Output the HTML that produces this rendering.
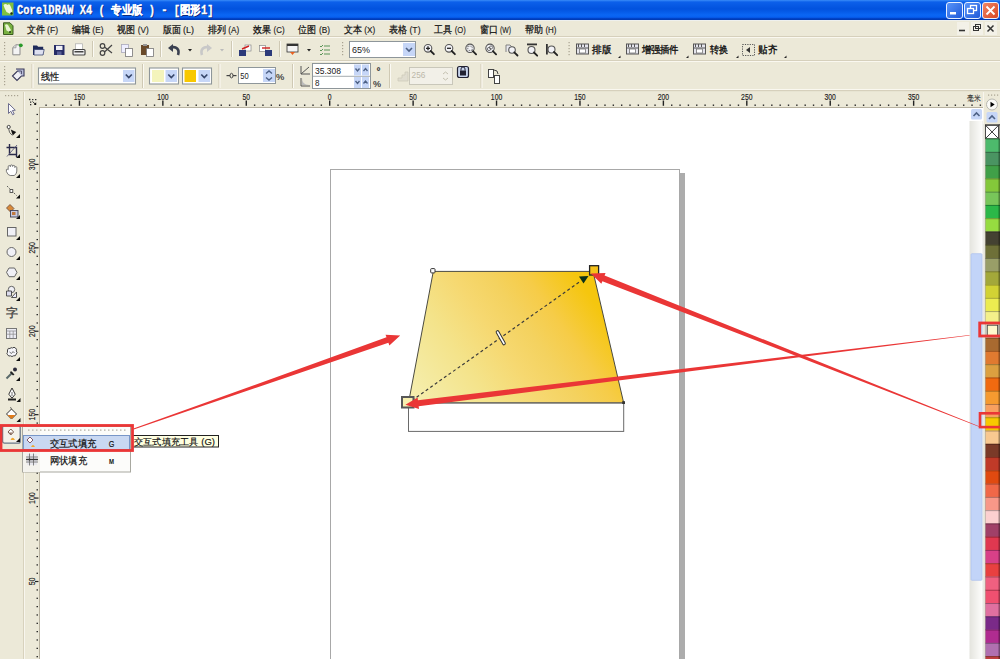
<!DOCTYPE html>
<html><head><meta charset="utf-8"><title>CorelDRAW X4</title>
<style>html,body{margin:0;padding:0;width:1000px;height:659px;overflow:hidden;background:#ece9d8;font-family:"Liberation Sans",sans-serif;}
svg{display:block;position:absolute;left:0;top:0}</style></head>
<body><svg width="1000" height="659" viewBox="0 0 1000 659">
<defs><linearGradient id="tg" x1="0" y1="0" x2="0" y2="1"><stop offset="0" stop-color="#3a8cf8"/><stop offset="0.1" stop-color="#0c60ea"/><stop offset="0.45" stop-color="#0252de"/><stop offset="0.75" stop-color="#0a66f4"/><stop offset="0.86" stop-color="#0860f0"/><stop offset="0.93" stop-color="#0040c4"/><stop offset="1" stop-color="#0038b0"/></linearGradient><linearGradient id="fillg" gradientUnits="userSpaceOnUse" x1="412" y1="400.5" x2="580" y2="281.5"><stop offset="0" stop-color="#f6efb0"/><stop offset="0.13" stop-color="#f4eaa0"/><stop offset="0.316" stop-color="#f4e38a"/><stop offset="0.514" stop-color="#f6d870"/><stop offset="0.66" stop-color="#f4d25f"/><stop offset="0.8" stop-color="#f6cc48"/><stop offset="1" stop-color="#f5c60e"/></linearGradient><linearGradient id="btnb" x1="0" y1="0" x2="1" y2="1"><stop offset="0" stop-color="#5a96fa"/><stop offset="1" stop-color="#1e58d8"/></linearGradient><linearGradient id="btnr" x1="0" y1="0" x2="1" y2="1"><stop offset="0" stop-color="#f08868"/><stop offset="1" stop-color="#d84420"/></linearGradient></defs><rect x="0" y="0" width="1000" height="20" fill="url(#tg)"/><rect x="0" y="20" width="1000" height="1" fill="#eef0ee"/><rect x="2" y="2.5" width="11.5" height="13" fill="#80c040"/><path d="M3.5 5 q2 -2 4 0 q2 -2 3 1 l2 5 l-2 3 l-4 -2 l-2 -4 z" fill="#eef8dc"/><circle cx="11.5" cy="13.5" r="1.2" fill="#203010"/><text x="18" y="14.5" font-family="Liberation Mono" font-size="12" fill="#0a2a80" font-weight="bold" textLength="196.5" lengthAdjust="spacingAndGlyphs" >CorelDRAW X4 ( 专业版 ) - [图形1]</text><text x="17" y="13.5" font-family="Liberation Mono" font-size="12" fill="#fff" font-weight="bold" textLength="196.5" lengthAdjust="spacingAndGlyphs" stroke="#fff" stroke-width="0.3">CorelDRAW X4 ( 专业版 ) - [图形1]</text><rect x="946.5" y="2.5" width="16" height="16" rx="2.5" fill="url(#btnb)" stroke="#e8f0ff" stroke-width="1"/><rect x="950" y="12" width="6" height="2.5" fill="#fff"/><rect x="964.5" y="2.5" width="16" height="16" rx="2.5" fill="url(#btnb)" stroke="#e8f0ff" stroke-width="1"/><rect x="970.5" y="5.5" width="6" height="5" fill="none" stroke="#fff" stroke-width="1.3"/><rect x="967.5" y="8.5" width="6" height="5" fill="url(#btnb)" stroke="#fff" stroke-width="1.3"/><rect x="982.5" y="2.5" width="16" height="16" rx="2.5" fill="url(#btnr)" stroke="#e8f0ff" stroke-width="1"/><path d="M986.5 6.5 L994.5 14.5 M994.5 6.5 L986.5 14.5" stroke="#fff" stroke-width="1.8"/><rect x="0" y="21" width="1000" height="15" fill="#ece9d8"/><path d="M3.5 22.8 h6.5 l3 3 v8.7 h-9.5 z" fill="#78b040" stroke="#3a5a20" stroke-width="1"/><path d="M5 25 q1.5 -1.5 3 0 l3 5 l-1.5 2 l-3 -1.5 z" fill="#e8f4d0"/><circle cx="10" cy="32" r="0.9" fill="#203010"/><text x="26.6" y="33" font-family="Liberation Sans" font-size="10" fill="#111" textLength="18" lengthAdjust="spacingAndGlyphs" stroke="#111" stroke-width="0.25">文件</text><text x="47.1" y="33" font-family="Liberation Sans" font-size="8.8" fill="#222" textLength="11" lengthAdjust="spacingAndGlyphs" stroke="#222" stroke-width="0.15">(F)</text><text x="71.9" y="33" font-family="Liberation Sans" font-size="10" fill="#111" textLength="18" lengthAdjust="spacingAndGlyphs" stroke="#111" stroke-width="0.25">编辑</text><text x="92.4" y="33" font-family="Liberation Sans" font-size="8.8" fill="#222" textLength="11" lengthAdjust="spacingAndGlyphs" stroke="#222" stroke-width="0.15">(E)</text><text x="117.2" y="33" font-family="Liberation Sans" font-size="10" fill="#111" textLength="18" lengthAdjust="spacingAndGlyphs" stroke="#111" stroke-width="0.25">视图</text><text x="137.7" y="33" font-family="Liberation Sans" font-size="8.8" fill="#222" textLength="11" lengthAdjust="spacingAndGlyphs" stroke="#222" stroke-width="0.15">(V)</text><text x="162.5" y="33" font-family="Liberation Sans" font-size="10" fill="#111" textLength="18" lengthAdjust="spacingAndGlyphs" stroke="#111" stroke-width="0.25">版面</text><text x="183.0" y="33" font-family="Liberation Sans" font-size="8.8" fill="#222" textLength="11" lengthAdjust="spacingAndGlyphs" stroke="#222" stroke-width="0.15">(L)</text><text x="207.8" y="33" font-family="Liberation Sans" font-size="10" fill="#111" textLength="18" lengthAdjust="spacingAndGlyphs" stroke="#111" stroke-width="0.25">排列</text><text x="228.3" y="33" font-family="Liberation Sans" font-size="8.8" fill="#222" textLength="11" lengthAdjust="spacingAndGlyphs" stroke="#222" stroke-width="0.15">(A)</text><text x="253.1" y="33" font-family="Liberation Sans" font-size="10" fill="#111" textLength="18" lengthAdjust="spacingAndGlyphs" stroke="#111" stroke-width="0.25">效果</text><text x="273.6" y="33" font-family="Liberation Sans" font-size="8.8" fill="#222" textLength="11" lengthAdjust="spacingAndGlyphs" stroke="#222" stroke-width="0.15">(C)</text><text x="298.4" y="33" font-family="Liberation Sans" font-size="10" fill="#111" textLength="18" lengthAdjust="spacingAndGlyphs" stroke="#111" stroke-width="0.25">位图</text><text x="318.9" y="33" font-family="Liberation Sans" font-size="8.8" fill="#222" textLength="11" lengthAdjust="spacingAndGlyphs" stroke="#222" stroke-width="0.15">(B)</text><text x="343.7" y="33" font-family="Liberation Sans" font-size="10" fill="#111" textLength="18" lengthAdjust="spacingAndGlyphs" stroke="#111" stroke-width="0.25">文本</text><text x="364.2" y="33" font-family="Liberation Sans" font-size="8.8" fill="#222" textLength="11" lengthAdjust="spacingAndGlyphs" stroke="#222" stroke-width="0.15">(X)</text><text x="389.0" y="33" font-family="Liberation Sans" font-size="10" fill="#111" textLength="18" lengthAdjust="spacingAndGlyphs" stroke="#111" stroke-width="0.25">表格</text><text x="409.5" y="33" font-family="Liberation Sans" font-size="8.8" fill="#222" textLength="11" lengthAdjust="spacingAndGlyphs" stroke="#222" stroke-width="0.15">(T)</text><text x="434.3" y="33" font-family="Liberation Sans" font-size="10" fill="#111" textLength="18" lengthAdjust="spacingAndGlyphs" stroke="#111" stroke-width="0.25">工具</text><text x="454.8" y="33" font-family="Liberation Sans" font-size="8.8" fill="#222" textLength="11" lengthAdjust="spacingAndGlyphs" stroke="#222" stroke-width="0.15">(O)</text><text x="479.6" y="33" font-family="Liberation Sans" font-size="10" fill="#111" textLength="18" lengthAdjust="spacingAndGlyphs" stroke="#111" stroke-width="0.25">窗口</text><text x="500.1" y="33" font-family="Liberation Sans" font-size="8.8" fill="#222" textLength="11" lengthAdjust="spacingAndGlyphs" stroke="#222" stroke-width="0.15">(W)</text><text x="524.9" y="33" font-family="Liberation Sans" font-size="10" fill="#111" textLength="18" lengthAdjust="spacingAndGlyphs" stroke="#111" stroke-width="0.25">帮助</text><text x="545.4" y="33" font-family="Liberation Sans" font-size="8.8" fill="#222" textLength="11" lengthAdjust="spacingAndGlyphs" stroke="#222" stroke-width="0.15">(H)</text><rect x="957" y="22" width="12" height="13" fill="#f3f1e8"/><rect x="971" y="22" width="12" height="13" fill="#f3f1e8"/><rect x="985" y="22" width="12" height="13" fill="#f3f1e8"/><path d="M959 30.5 h6" stroke="#333" stroke-width="1.6"/><rect x="973.5" y="26.5" width="5" height="4" fill="none" stroke="#333" stroke-width="1"/><rect x="975.5" y="24.5" width="5" height="4" fill="none" stroke="#333" stroke-width="1"/><path d="M987.5 25.5 l6 6 M993.5 25.5 l-6 6" stroke="#333" stroke-width="1.5"/><rect x="0" y="36" width="1000" height="1" fill="#d6d0bc"/><rect x="0" y="37" width="1000" height="1" fill="#faf8f0"/><rect x="4" y="42" width="1.2" height="1.2" fill="#a8a290"/><rect x="4" y="45" width="1.2" height="1.2" fill="#a8a290"/><rect x="4" y="48" width="1.2" height="1.2" fill="#a8a290"/><rect x="4" y="51" width="1.2" height="1.2" fill="#a8a290"/><rect x="4" y="54" width="1.2" height="1.2" fill="#a8a290"/><path d="M12.8 54.8 V47.5 L16 44.8 H20 V54.8 Z" fill="#f4f4f4" stroke="#8a8a8a" stroke-width="1"/><path d="M13 47.8 h3 v-3" fill="#ddd" stroke="#8a8a8a" stroke-width="0.7"/><circle cx="20.8" cy="45.3" r="1.9" fill="#2a9a2a"/><path d="M33 45.5 h4 l1.2 1.2 h5 v8.3 h-10.2 z" fill="#1e2a5a"/><path d="M34.2 49.5 h10 l-1.2 5.5 h-9 z" fill="#dde0f0" stroke="#2a3666" stroke-width="0.7"/><rect x="54" y="45" width="10.5" height="10" fill="#262c66"/><rect x="56" y="45.8" width="6.5" height="4.2" fill="#f0f0f6"/><rect x="57" y="51.5" width="4.5" height="3.5" fill="#5a6098"/><rect x="75.5" y="43.8" width="7" height="6" fill="#fff" stroke="#aaa" stroke-width="0.7"/><rect x="73" y="49.5" width="12" height="5.5" rx="1" fill="#f2f2f2" stroke="#444" stroke-width="1.2"/><rect x="74.5" y="51" width="9" height="1.5" fill="#444"/><rect x="92" y="41" width="1" height="16" fill="#cfc9b4"/><rect x="93" y="41" width="1" height="16" fill="#fbfaf4"/><circle cx="102.5" cy="53" r="2.3" fill="none" stroke="#444" stroke-width="1.2"/><circle cx="102.5" cy="46" r="2.3" fill="none" stroke="#444" stroke-width="1.2"/><path d="M104.5 47 L112 53 M104.5 52 L112 45" stroke="#444" stroke-width="1.2"/><rect x="121.5" y="44.5" width="7" height="8" fill="#eef" stroke="#aab" stroke-width="0.8"/><rect x="125.5" y="48.5" width="7" height="8" fill="#fff" stroke="#777" stroke-width="0.8"/><rect x="141" y="45" width="8" height="10" fill="#6a4a2a"/><rect x="143" y="44" width="4" height="2" fill="#999"/><rect x="146.5" y="48.5" width="7" height="8" fill="#fff" stroke="#777" stroke-width="0.8"/><rect x="160" y="41" width="1" height="16" fill="#cfc9b4"/><rect x="161" y="41" width="1" height="16" fill="#fbfaf4"/><path d="M178 55 C180 49 176 46 171 47.5" fill="none" stroke="#3a4050" stroke-width="2.6"/><path d="M168 48 L173 44 L173 52 Z" fill="#3a4050"/><path d="M188 49 h4 l-2 2.5 z" fill="#222"/><path d="M202 55 C200 49 204 46 209 47.5" fill="none" stroke="#c8c8c8" stroke-width="2.6"/><path d="M212 48 L207 44 L207 52 Z" fill="#c8c8c8"/><path d="M220 49 h4 l-2 2.5 z" fill="#bbb"/><rect x="231" y="41" width="1" height="16" fill="#cfc9b4"/><rect x="232" y="41" width="1" height="16" fill="#fbfaf4"/><rect x="245" y="45" width="6" height="6" fill="#fff" stroke="#888" stroke-width="0.7"/><rect x="239" y="50" width="7" height="6" fill="#2c3a7a"/><path d="M242 49 L249 46" stroke="#d02020" stroke-width="1.4"/><rect x="259.5" y="45.5" width="6" height="6" fill="#fff" stroke="#888" stroke-width="0.7"/><rect x="265" y="50" width="7" height="6" fill="#2c3a7a"/><path d="M262 48 L270 48" stroke="#d02020" stroke-width="1.4"/><rect x="279" y="41" width="1" height="16" fill="#cfc9b4"/><rect x="280" y="41" width="1" height="16" fill="#fbfaf4"/><rect x="287" y="44" width="11" height="8" fill="#f4f4f4" stroke="#333" stroke-width="0.8"/><rect x="287" y="44" width="11" height="2" fill="#333"/><path d="M290 52 l2.5 3 l2.5 -3 z" fill="#e86020"/><path d="M307 49 h4 l-2 2.5 z" fill="#222"/><path d="M320 46 l1 1 l2 -2 M320 50 l1 1 l2 -2 M320 54 l1 1 l2 -2 M324 46 h6 M324 50 h6 M324 54 h6" stroke="#4a8a4a" stroke-width="0.9" fill="none"/><rect x="342" y="42" width="1.2" height="1.2" fill="#a8a290"/><rect x="342" y="45" width="1.2" height="1.2" fill="#a8a290"/><rect x="342" y="48" width="1.2" height="1.2" fill="#a8a290"/><rect x="342" y="51" width="1.2" height="1.2" fill="#a8a290"/><rect x="342" y="54" width="1.2" height="1.2" fill="#a8a290"/><rect x="349.5" y="41.5" width="66" height="16" fill="#fff" stroke="#8e969a" stroke-width="1"/><rect x="403" y="43" width="12" height="13" fill="#c6d6f7"/><path d="M406 48 l3 3 l3 -3" stroke="#4d6185" stroke-width="1.6" fill="none"/><text x="352" y="52.8" font-family="Liberation Sans" font-size="9.2" fill="#222" textLength="18" lengthAdjust="spacingAndGlyphs" >65%</text><circle cx="428" cy="48.3" r="3.8" fill="#f2f2f6" stroke="#555" stroke-width="1.1"/><path d="M430.7 51.0 l3.2 3.2" stroke="#222" stroke-width="1.8" stroke-linecap="round"/><path d="M426 48.3 h4 M428 46.3 v4" stroke="#222" stroke-width="1.3"/><circle cx="449" cy="48.3" r="3.8" fill="#f2f2f6" stroke="#555" stroke-width="1.1"/><path d="M451.7 51.0 l3.2 3.2" stroke="#222" stroke-width="1.8" stroke-linecap="round"/><path d="M447 48.3 h4" stroke="#222" stroke-width="1.3"/><circle cx="470" cy="48.3" r="4.2" fill="#f2f2f6" stroke="#555" stroke-width="1.1"/><path d="M472.9 51.2 l3.2 3.2" stroke="#222" stroke-width="1.8" stroke-linecap="round"/><rect x="467.8" y="46.2" width="4.4" height="4.2" fill="none" stroke="#555" stroke-width="0.8" stroke-dasharray="1,0.8"/><circle cx="490" cy="48.3" r="4.2" fill="#f2f2f6" stroke="#555" stroke-width="1.1"/><path d="M492.9 51.2 l3.2 3.2" stroke="#222" stroke-width="1.8" stroke-linecap="round"/><circle cx="489" cy="49" r="1.6" fill="none" stroke="#555" stroke-width="0.8"/><circle cx="491" cy="47.5" r="1.6" fill="none" stroke="#555" stroke-width="0.8"/><path d="M506 52 v-7 h4 l1.5 1.5 v2" fill="#e8e8ee" stroke="#777" stroke-width="0.9"/><circle cx="512" cy="50" r="3.3" fill="#f2f2f6" stroke="#555" stroke-width="1.1"/><path d="M514.3 52.3 l3.2 3.2" stroke="#222" stroke-width="1.8" stroke-linecap="round"/><rect x="527" y="43.5" width="10" height="1.8" fill="#333"/><circle cx="531.5" cy="50" r="3.5" fill="#f2f2f6" stroke="#555" stroke-width="1.1"/><path d="M534.0 52.5 l3.2 3.2" stroke="#222" stroke-width="1.8" stroke-linecap="round"/><rect x="546" y="44" width="1.8" height="10.5" fill="#333"/><circle cx="551.5" cy="49.5" r="3.5" fill="#f2f2f6" stroke="#555" stroke-width="1.1"/><path d="M554.0 52.0 l3.2 3.2" stroke="#222" stroke-width="1.8" stroke-linecap="round"/><rect x="568.5" y="42" width="1.2" height="1.2" fill="#a8a290"/><rect x="568.5" y="45" width="1.2" height="1.2" fill="#a8a290"/><rect x="568.5" y="48" width="1.2" height="1.2" fill="#a8a290"/><rect x="568.5" y="51" width="1.2" height="1.2" fill="#a8a290"/><rect x="568.5" y="54" width="1.2" height="1.2" fill="#a8a290"/><rect x="576.5" y="44" width="12" height="10" fill="#e4e4ec" stroke="#555" stroke-width="1"/><path d="M578.5 44 v3 M581.5 44 v3 M584.5 44 v3 M576.5 48 h12" stroke="#555" stroke-width="1"/><rect x="579.5" y="49" width="6" height="4" fill="#fff" stroke="#666" stroke-width="0.7"/><text x="592.4" y="53" font-family="Liberation Sans" font-size="10" fill="#111" textLength="19.2" lengthAdjust="spacingAndGlyphs" stroke="#111" stroke-width="0.35">排版</text><path d="M618 58 l2.5 0 l0 -2.5 z" fill="#222"/><rect x="626.5" y="44" width="12" height="10" fill="#e4e4ec" stroke="#555" stroke-width="1"/><path d="M628.5 44 v3 M631.5 44 v3 M634.5 44 v3 M626.5 48 h12" stroke="#555" stroke-width="1"/><rect x="629.5" y="49" width="6" height="4" fill="#fff" stroke="#666" stroke-width="0.7"/><text x="641.6" y="53" font-family="Liberation Sans" font-size="10" fill="#111" textLength="37.2" lengthAdjust="spacingAndGlyphs" stroke="#111" stroke-width="0.35">增强插件</text><path d="M686 58 l2.5 0 l0 -2.5 z" fill="#222"/><rect x="693.5" y="44" width="12" height="10" fill="#e4e4ec" stroke="#555" stroke-width="1"/><path d="M695.5 44 v3 M698.5 44 v3 M701.5 44 v3 M693.5 48 h12" stroke="#555" stroke-width="1"/><rect x="696.5" y="49" width="6" height="4" fill="#fff" stroke="#666" stroke-width="0.7"/><text x="710" y="53" font-family="Liberation Sans" font-size="10" fill="#111" textLength="18" lengthAdjust="spacingAndGlyphs" stroke="#111" stroke-width="0.35">转换</text><path d="M736 58 l2.5 0 l0 -2.5 z" fill="#222"/><rect x="742.5" y="44.5" width="12" height="11" fill="none" stroke="#555" stroke-width="1" stroke-dasharray="1.2,1.2"/><path d="M750 47 v6 l-4 -3 z" fill="#333"/><text x="758" y="53" font-family="Liberation Sans" font-size="10" fill="#111" textLength="19" lengthAdjust="spacingAndGlyphs" stroke="#111" stroke-width="0.35">贴齐</text><path d="M784 58 l2.5 0 l0 -2.5 z" fill="#222"/><rect x="0" y="60" width="1000" height="1" fill="#d6d0bc"/><rect x="0" y="61" width="1000" height="1" fill="#faf8f0"/><rect x="4" y="66" width="1.2" height="1.2" fill="#a8a290"/><rect x="4" y="69" width="1.2" height="1.2" fill="#a8a290"/><rect x="4" y="72" width="1.2" height="1.2" fill="#a8a290"/><rect x="4" y="75" width="1.2" height="1.2" fill="#a8a290"/><rect x="4" y="78" width="1.2" height="1.2" fill="#a8a290"/><rect x="4" y="81" width="1.2" height="1.2" fill="#a8a290"/><rect x="4" y="84" width="1.2" height="1.2" fill="#a8a290"/><path d="M12.5 76 L18 70.5 L22.5 75 L17 80.5 Z" fill="#f0f0f6" stroke="#3a3a5a" stroke-width="1.1"/><path d="M16 69 h8 v7 h-2" fill="#b8bcd8" stroke="#3a3a5a" stroke-width="1.1"/><path d="M17.5 71 l4 0 l0 3" stroke="#3a3a5a" stroke-width="0.8" fill="none"/><rect x="31.5" y="64" width="1" height="24" fill="#cfc9b4"/><rect x="32.5" y="64" width="1" height="24" fill="#fbfaf4"/><rect x="38.5" y="68" width="97" height="16" fill="#fff" stroke="#8e969a" stroke-width="1.1"/><rect x="123" y="70" width="11.5" height="12" fill="#c6d6f7"/><path d="M125.8 74.5 l3 3 l3 -3" stroke="#36466a" stroke-width="1.7" fill="none"/><text x="41" y="80" font-family="Liberation Sans" font-size="10" fill="#111" textLength="18.5" lengthAdjust="spacingAndGlyphs" stroke="#111" stroke-width="0.2">线性</text><rect x="142" y="64" width="1" height="24" fill="#cfc9b4"/><rect x="143" y="64" width="1" height="24" fill="#fbfaf4"/><rect x="149.5" y="68" width="29" height="16" fill="#fff" stroke="#8e969a" stroke-width="1.1"/><rect x="152" y="70" width="12" height="12" fill="#f4f4bc"/><rect x="165.5" y="70" width="11.5" height="12" fill="#c6d6f7"/><path d="M168.3 74.5 l3 3 l3 -3" stroke="#36466a" stroke-width="1.7" fill="none"/><rect x="182.5" y="68" width="29" height="16" fill="#fff" stroke="#8e969a" stroke-width="1.1"/><rect x="184.5" y="70" width="11.5" height="12" fill="#f8c800"/><rect x="198.5" y="70" width="11.5" height="12" fill="#c6d6f7"/><path d="M201.3 74.5 l3 3 l3 -3" stroke="#36466a" stroke-width="1.7" fill="none"/><rect x="218.5" y="64" width="1" height="24" fill="#cfc9b4"/><rect x="219.5" y="64" width="1" height="24" fill="#fbfaf4"/><path d="M226.5 75.6 h10" stroke="#444" stroke-width="1.2"/><ellipse cx="231.5" cy="75.6" rx="1.5" ry="2.3" fill="#ece9d8" stroke="#444" stroke-width="1"/><rect x="238.5" y="67.5" width="37" height="16" fill="#fff" stroke="#8e969a" stroke-width="1"/><rect x="263" y="69" width="12" height="13" fill="#c6d6f7"/><path d="M266 73.5 l3 -2.5 l3 2.5 M266 77.5 l3 2.5 l3 -2.5" stroke="#4d6185" stroke-width="1.4" fill="none"/><text x="240.2" y="79.2" font-family="Liberation Sans" font-size="9.5" fill="#222" textLength="8.4" lengthAdjust="spacingAndGlyphs" >50</text><text x="276" y="79.8" font-family="Liberation Sans" font-size="9.5" fill="#333" textLength="8.2" lengthAdjust="spacingAndGlyphs" stroke="#333" stroke-width="0.2">%</text><rect x="292" y="64" width="1" height="24" fill="#cfc9b4"/><rect x="293" y="64" width="1" height="24" fill="#fbfaf4"/><path d="M301 74 V66 M301 74 H310 M301 74 L309 67" stroke="#555" stroke-width="1" fill="none"/><path d="M301 86 V78 M301 86 H310" stroke="#555" stroke-width="1" fill="none"/><path d="M302 78 Q302 85 309 85 L302 85 Z" fill="#bbb"/><rect x="312.5" y="63.5" width="58" height="25" fill="#fff" stroke="#8e969a" stroke-width="1"/><path d="M313 76.3 h57" stroke="#8e969a" stroke-width="0.8"/><rect x="354" y="64.5" width="7" height="11" fill="#c6d6f7"/><rect x="362" y="64.5" width="7" height="11" fill="#c6d6f7"/><rect x="354" y="77" width="7" height="11" fill="#c6d6f7"/><rect x="362" y="77" width="7" height="11" fill="#c6d6f7"/><path d="M355.5 68.5 l2 2.5 l2 -2.5 M363.5 71 l2 -2.5 l2 2.5" stroke="#4d6185" stroke-width="1.3" fill="none"/><path d="M355.5 81.0 l2 2.5 l2 -2.5 M363.5 83.5 l2 -2.5 l2 2.5" stroke="#4d6185" stroke-width="1.3" fill="none"/><text x="315" y="73.8" font-family="Liberation Sans" font-size="8.8" fill="#222" textLength="26" lengthAdjust="spacingAndGlyphs" >35.308</text><text x="315" y="85.6" font-family="Liberation Sans" font-size="8.8" fill="#222" textLength="4.5" lengthAdjust="spacingAndGlyphs" >8</text><text x="376.5" y="74.5" font-family="Liberation Sans" font-size="10" fill="#333" stroke="#333" stroke-width="0.3">°</text><text x="373" y="86.6" font-family="Liberation Sans" font-size="9.5" fill="#333" textLength="8" lengthAdjust="spacingAndGlyphs" stroke="#333" stroke-width="0.2">%</text><rect x="389" y="64" width="1" height="24" fill="#cfc9b4"/><rect x="390" y="64" width="1" height="24" fill="#fbfaf4"/><path d="M398 81 h10 v-9 l-3 0 l0 3 l-3 0 l0 3 l-4 0 z" fill="#e0ddd0" stroke="#ccc8b8" stroke-width="0.7"/><rect x="409.5" y="67.5" width="43" height="17" fill="#f2f0e8" stroke="#c9c7ba" stroke-width="1"/><text x="411.6" y="78.2" font-family="Liberation Sans" font-size="8.8" fill="#bcb8a8" textLength="13.8" lengthAdjust="spacingAndGlyphs" >256</text><path d="M443 74 l2.5 -2 l2.5 2 M443 78 l2.5 2 l2.5 -2" stroke="#c4c0b0" stroke-width="1" fill="none"/><rect x="457.5" y="66.5" width="11" height="11" rx="2" fill="#c8d4ec" stroke="#223" stroke-width="1.2"/><rect x="460" y="70.5" width="6" height="5" fill="#223"/><path d="M461 70.5 v-1.5 a2 2 0 0 1 4 0 v1.5" stroke="#223" fill="none"/><rect x="480.5" y="64" width="1" height="24" fill="#cfc9b4"/><rect x="481.5" y="64" width="1" height="24" fill="#fbfaf4"/><rect x="488.5" y="69.5" width="5" height="8" fill="#fff" stroke="#444" stroke-width="1"/><rect x="494.5" y="75.5" width="5" height="8" fill="#fff" stroke="#444" stroke-width="1"/><path d="M494 70 q4 0 4 4" stroke="#444" fill="none"/><rect x="0" y="89" width="1000" height="1" fill="#faf8f0"/><rect x="0" y="90" width="1000" height="1.2" fill="#d6d0bc"/><rect x="24" y="92" width="946" height="15" fill="#ece9d8"/><rect x="0" y="92" width="23" height="567" fill="#ece9d8"/><rect x="23" y="92" width="1" height="567" fill="#d8d2bd"/><rect x="24" y="92" width="1" height="567" fill="#f8f6ee"/><rect x="29" y="98.8" width="1.4" height="1.4" fill="#222"/><rect x="32" y="99" width="1.4" height="1.2" fill="#333"/><rect x="35" y="99" width="1.4" height="1.2" fill="#333"/><rect x="30" y="101.5" width="1.3" height="1.3" fill="#333"/><rect x="30" y="104" width="1.3" height="1.3" fill="#333"/><path d="M32.5 101.5 L35 103.8" stroke="#222" stroke-width="0.9"/><path d="M33.8 104.8 L36.2 102.2 L36.2 105 Z" fill="#000"/><rect x="45.37" y="104.5" width="1.4" height="1.4" fill="#222"/><rect x="53.71" y="104.5" width="1.4" height="1.4" fill="#222"/><rect x="62.06" y="104.5" width="1.4" height="1.4" fill="#222"/><rect x="70.40" y="104.5" width="1.4" height="1.4" fill="#222"/><rect x="78.74" y="100.5" width="1.4" height="5.3" fill="#222"/><text x="79.44" y="99.8" text-anchor="middle" font-family="Liberation Sans" font-size="8.6" fill="#222" stroke="#222" stroke-width="0.15" textLength="11.4" lengthAdjust="spacingAndGlyphs">150</text><rect x="87.08" y="104.5" width="1.4" height="1.4" fill="#222"/><rect x="95.42" y="104.5" width="1.4" height="1.4" fill="#222"/><rect x="103.77" y="104.5" width="1.4" height="1.4" fill="#222"/><rect x="112.11" y="104.5" width="1.4" height="1.4" fill="#222"/><rect x="120.45" y="104.5" width="1.4" height="1.4" fill="#222"/><rect x="128.79" y="104.5" width="1.4" height="1.4" fill="#222"/><rect x="137.13" y="104.5" width="1.4" height="1.4" fill="#222"/><rect x="145.48" y="104.5" width="1.4" height="1.4" fill="#222"/><rect x="153.82" y="104.5" width="1.4" height="1.4" fill="#222"/><rect x="162.16" y="100.5" width="1.4" height="5.3" fill="#222"/><text x="162.86" y="99.8" text-anchor="middle" font-family="Liberation Sans" font-size="8.6" fill="#222" stroke="#222" stroke-width="0.15" textLength="11.4" lengthAdjust="spacingAndGlyphs">100</text><rect x="170.50" y="104.5" width="1.4" height="1.4" fill="#222"/><rect x="178.84" y="104.5" width="1.4" height="1.4" fill="#222"/><rect x="187.19" y="104.5" width="1.4" height="1.4" fill="#222"/><rect x="195.53" y="104.5" width="1.4" height="1.4" fill="#222"/><rect x="203.87" y="104.5" width="1.4" height="1.4" fill="#222"/><rect x="212.21" y="104.5" width="1.4" height="1.4" fill="#222"/><rect x="220.55" y="104.5" width="1.4" height="1.4" fill="#222"/><rect x="228.90" y="104.5" width="1.4" height="1.4" fill="#222"/><rect x="237.24" y="104.5" width="1.4" height="1.4" fill="#222"/><rect x="245.58" y="100.5" width="1.4" height="5.3" fill="#222"/><text x="246.28" y="99.8" text-anchor="middle" font-family="Liberation Sans" font-size="8.6" fill="#222" stroke="#222" stroke-width="0.15" textLength="7.6" lengthAdjust="spacingAndGlyphs">50</text><rect x="253.92" y="104.5" width="1.4" height="1.4" fill="#222"/><rect x="262.26" y="104.5" width="1.4" height="1.4" fill="#222"/><rect x="270.61" y="104.5" width="1.4" height="1.4" fill="#222"/><rect x="278.95" y="104.5" width="1.4" height="1.4" fill="#222"/><rect x="287.29" y="104.5" width="1.4" height="1.4" fill="#222"/><rect x="295.63" y="104.5" width="1.4" height="1.4" fill="#222"/><rect x="303.97" y="104.5" width="1.4" height="1.4" fill="#222"/><rect x="312.32" y="104.5" width="1.4" height="1.4" fill="#222"/><rect x="320.66" y="104.5" width="1.4" height="1.4" fill="#222"/><rect x="329.00" y="100.5" width="1.4" height="5.3" fill="#222"/><text x="329.70" y="99.8" text-anchor="middle" font-family="Liberation Sans" font-size="8.6" fill="#222" stroke="#222" stroke-width="0.15" textLength="3.8" lengthAdjust="spacingAndGlyphs">0</text><rect x="337.34" y="104.5" width="1.4" height="1.4" fill="#222"/><rect x="345.68" y="104.5" width="1.4" height="1.4" fill="#222"/><rect x="354.03" y="104.5" width="1.4" height="1.4" fill="#222"/><rect x="362.37" y="104.5" width="1.4" height="1.4" fill="#222"/><rect x="370.71" y="104.5" width="1.4" height="1.4" fill="#222"/><rect x="379.05" y="104.5" width="1.4" height="1.4" fill="#222"/><rect x="387.39" y="104.5" width="1.4" height="1.4" fill="#222"/><rect x="395.74" y="104.5" width="1.4" height="1.4" fill="#222"/><rect x="404.08" y="104.5" width="1.4" height="1.4" fill="#222"/><rect x="412.42" y="100.5" width="1.4" height="5.3" fill="#222"/><text x="413.12" y="99.8" text-anchor="middle" font-family="Liberation Sans" font-size="8.6" fill="#222" stroke="#222" stroke-width="0.15" textLength="7.6" lengthAdjust="spacingAndGlyphs">50</text><rect x="420.76" y="104.5" width="1.4" height="1.4" fill="#222"/><rect x="429.10" y="104.5" width="1.4" height="1.4" fill="#222"/><rect x="437.45" y="104.5" width="1.4" height="1.4" fill="#222"/><rect x="445.79" y="104.5" width="1.4" height="1.4" fill="#222"/><rect x="454.13" y="104.5" width="1.4" height="1.4" fill="#222"/><rect x="462.47" y="104.5" width="1.4" height="1.4" fill="#222"/><rect x="470.81" y="104.5" width="1.4" height="1.4" fill="#222"/><rect x="479.16" y="104.5" width="1.4" height="1.4" fill="#222"/><rect x="487.50" y="104.5" width="1.4" height="1.4" fill="#222"/><rect x="495.84" y="100.5" width="1.4" height="5.3" fill="#222"/><text x="496.54" y="99.8" text-anchor="middle" font-family="Liberation Sans" font-size="8.6" fill="#222" stroke="#222" stroke-width="0.15" textLength="11.4" lengthAdjust="spacingAndGlyphs">100</text><rect x="504.18" y="104.5" width="1.4" height="1.4" fill="#222"/><rect x="512.52" y="104.5" width="1.4" height="1.4" fill="#222"/><rect x="520.87" y="104.5" width="1.4" height="1.4" fill="#222"/><rect x="529.21" y="104.5" width="1.4" height="1.4" fill="#222"/><rect x="537.55" y="104.5" width="1.4" height="1.4" fill="#222"/><rect x="545.89" y="104.5" width="1.4" height="1.4" fill="#222"/><rect x="554.23" y="104.5" width="1.4" height="1.4" fill="#222"/><rect x="562.58" y="104.5" width="1.4" height="1.4" fill="#222"/><rect x="570.92" y="104.5" width="1.4" height="1.4" fill="#222"/><rect x="579.26" y="100.5" width="1.4" height="5.3" fill="#222"/><text x="579.96" y="99.8" text-anchor="middle" font-family="Liberation Sans" font-size="8.6" fill="#222" stroke="#222" stroke-width="0.15" textLength="11.4" lengthAdjust="spacingAndGlyphs">150</text><rect x="587.60" y="104.5" width="1.4" height="1.4" fill="#222"/><rect x="595.94" y="104.5" width="1.4" height="1.4" fill="#222"/><rect x="604.29" y="104.5" width="1.4" height="1.4" fill="#222"/><rect x="612.63" y="104.5" width="1.4" height="1.4" fill="#222"/><rect x="620.97" y="104.5" width="1.4" height="1.4" fill="#222"/><rect x="629.31" y="104.5" width="1.4" height="1.4" fill="#222"/><rect x="637.65" y="104.5" width="1.4" height="1.4" fill="#222"/><rect x="646.00" y="104.5" width="1.4" height="1.4" fill="#222"/><rect x="654.34" y="104.5" width="1.4" height="1.4" fill="#222"/><rect x="662.68" y="100.5" width="1.4" height="5.3" fill="#222"/><text x="663.38" y="99.8" text-anchor="middle" font-family="Liberation Sans" font-size="8.6" fill="#222" stroke="#222" stroke-width="0.15" textLength="11.4" lengthAdjust="spacingAndGlyphs">200</text><rect x="671.02" y="104.5" width="1.4" height="1.4" fill="#222"/><rect x="679.36" y="104.5" width="1.4" height="1.4" fill="#222"/><rect x="687.71" y="104.5" width="1.4" height="1.4" fill="#222"/><rect x="696.05" y="104.5" width="1.4" height="1.4" fill="#222"/><rect x="704.39" y="104.5" width="1.4" height="1.4" fill="#222"/><rect x="712.73" y="104.5" width="1.4" height="1.4" fill="#222"/><rect x="721.07" y="104.5" width="1.4" height="1.4" fill="#222"/><rect x="729.42" y="104.5" width="1.4" height="1.4" fill="#222"/><rect x="737.76" y="104.5" width="1.4" height="1.4" fill="#222"/><rect x="746.10" y="100.5" width="1.4" height="5.3" fill="#222"/><text x="746.80" y="99.8" text-anchor="middle" font-family="Liberation Sans" font-size="8.6" fill="#222" stroke="#222" stroke-width="0.15" textLength="11.4" lengthAdjust="spacingAndGlyphs">250</text><rect x="754.44" y="104.5" width="1.4" height="1.4" fill="#222"/><rect x="762.78" y="104.5" width="1.4" height="1.4" fill="#222"/><rect x="771.13" y="104.5" width="1.4" height="1.4" fill="#222"/><rect x="779.47" y="104.5" width="1.4" height="1.4" fill="#222"/><rect x="787.81" y="104.5" width="1.4" height="1.4" fill="#222"/><rect x="796.15" y="104.5" width="1.4" height="1.4" fill="#222"/><rect x="804.49" y="104.5" width="1.4" height="1.4" fill="#222"/><rect x="812.84" y="104.5" width="1.4" height="1.4" fill="#222"/><rect x="821.18" y="104.5" width="1.4" height="1.4" fill="#222"/><rect x="829.52" y="100.5" width="1.4" height="5.3" fill="#222"/><text x="830.22" y="99.8" text-anchor="middle" font-family="Liberation Sans" font-size="8.6" fill="#222" stroke="#222" stroke-width="0.15" textLength="11.4" lengthAdjust="spacingAndGlyphs">300</text><rect x="837.86" y="104.5" width="1.4" height="1.4" fill="#222"/><rect x="846.20" y="104.5" width="1.4" height="1.4" fill="#222"/><rect x="854.55" y="104.5" width="1.4" height="1.4" fill="#222"/><rect x="862.89" y="104.5" width="1.4" height="1.4" fill="#222"/><rect x="871.23" y="104.5" width="1.4" height="1.4" fill="#222"/><rect x="879.57" y="104.5" width="1.4" height="1.4" fill="#222"/><rect x="887.91" y="104.5" width="1.4" height="1.4" fill="#222"/><rect x="896.26" y="104.5" width="1.4" height="1.4" fill="#222"/><rect x="904.60" y="104.5" width="1.4" height="1.4" fill="#222"/><rect x="912.94" y="100.5" width="1.4" height="5.3" fill="#222"/><text x="913.64" y="99.8" text-anchor="middle" font-family="Liberation Sans" font-size="8.6" fill="#222" stroke="#222" stroke-width="0.15" textLength="11.4" lengthAdjust="spacingAndGlyphs">350</text><rect x="921.28" y="104.5" width="1.4" height="1.4" fill="#222"/><rect x="929.62" y="104.5" width="1.4" height="1.4" fill="#222"/><rect x="937.97" y="104.5" width="1.4" height="1.4" fill="#222"/><rect x="946.31" y="104.5" width="1.4" height="1.4" fill="#222"/><rect x="954.65" y="104.5" width="1.4" height="1.4" fill="#222"/><rect x="962.99" y="104.5" width="1.4" height="1.4" fill="#222"/><rect x="971.33" y="104.5" width="1.4" height="1.4" fill="#222"/><rect x="979.68" y="104.5" width="1.4" height="1.4" fill="#222"/><text x="966.7" y="100.6" font-family="Liberation Sans" font-size="7.5" fill="#222" textLength="13.7" lengthAdjust="spacingAndGlyphs" >毫米</text><rect x="36.5" y="656.08" width="1.5" height="1.2" fill="#222"/><rect x="36.5" y="647.74" width="1.5" height="1.2" fill="#222"/><rect x="36.5" y="639.39" width="1.5" height="1.2" fill="#222"/><rect x="36.5" y="631.05" width="1.5" height="1.2" fill="#222"/><rect x="36.5" y="622.71" width="1.5" height="1.2" fill="#222"/><rect x="36.5" y="614.37" width="1.5" height="1.2" fill="#222"/><rect x="36.5" y="606.03" width="1.5" height="1.2" fill="#222"/><rect x="36.5" y="597.68" width="1.5" height="1.2" fill="#222"/><rect x="36.5" y="589.34" width="1.5" height="1.2" fill="#222"/><rect x="35" y="580.90" width="3.5" height="1.2" fill="#222"/><text transform="translate(35 581.50) rotate(-90)" text-anchor="middle" font-family="Liberation Sans" font-size="8.6" fill="#222" stroke="#222" stroke-width="0.15" textLength="7.7" lengthAdjust="spacingAndGlyphs">50</text><rect x="36.5" y="572.66" width="1.5" height="1.2" fill="#222"/><rect x="36.5" y="564.32" width="1.5" height="1.2" fill="#222"/><rect x="36.5" y="555.97" width="1.5" height="1.2" fill="#222"/><rect x="36.5" y="547.63" width="1.5" height="1.2" fill="#222"/><rect x="36.5" y="539.29" width="1.5" height="1.2" fill="#222"/><rect x="36.5" y="530.95" width="1.5" height="1.2" fill="#222"/><rect x="36.5" y="522.61" width="1.5" height="1.2" fill="#222"/><rect x="36.5" y="514.26" width="1.5" height="1.2" fill="#222"/><rect x="36.5" y="505.92" width="1.5" height="1.2" fill="#222"/><rect x="35" y="497.48" width="3.5" height="1.2" fill="#222"/><text transform="translate(35 498.08) rotate(-90)" text-anchor="middle" font-family="Liberation Sans" font-size="8.6" fill="#222" stroke="#222" stroke-width="0.15" textLength="11.6" lengthAdjust="spacingAndGlyphs">100</text><rect x="36.5" y="489.24" width="1.5" height="1.2" fill="#222"/><rect x="36.5" y="480.90" width="1.5" height="1.2" fill="#222"/><rect x="36.5" y="472.55" width="1.5" height="1.2" fill="#222"/><rect x="36.5" y="464.21" width="1.5" height="1.2" fill="#222"/><rect x="36.5" y="455.87" width="1.5" height="1.2" fill="#222"/><rect x="36.5" y="447.53" width="1.5" height="1.2" fill="#222"/><rect x="36.5" y="439.19" width="1.5" height="1.2" fill="#222"/><rect x="36.5" y="430.84" width="1.5" height="1.2" fill="#222"/><rect x="36.5" y="422.50" width="1.5" height="1.2" fill="#222"/><rect x="35" y="414.06" width="3.5" height="1.2" fill="#222"/><text transform="translate(35 414.66) rotate(-90)" text-anchor="middle" font-family="Liberation Sans" font-size="8.6" fill="#222" stroke="#222" stroke-width="0.15" textLength="11.6" lengthAdjust="spacingAndGlyphs">150</text><rect x="36.5" y="405.82" width="1.5" height="1.2" fill="#222"/><rect x="36.5" y="397.48" width="1.5" height="1.2" fill="#222"/><rect x="36.5" y="389.13" width="1.5" height="1.2" fill="#222"/><rect x="36.5" y="380.79" width="1.5" height="1.2" fill="#222"/><rect x="36.5" y="372.45" width="1.5" height="1.2" fill="#222"/><rect x="36.5" y="364.11" width="1.5" height="1.2" fill="#222"/><rect x="36.5" y="355.77" width="1.5" height="1.2" fill="#222"/><rect x="36.5" y="347.42" width="1.5" height="1.2" fill="#222"/><rect x="36.5" y="339.08" width="1.5" height="1.2" fill="#222"/><rect x="35" y="330.64" width="3.5" height="1.2" fill="#222"/><text transform="translate(35 331.24) rotate(-90)" text-anchor="middle" font-family="Liberation Sans" font-size="8.6" fill="#222" stroke="#222" stroke-width="0.15" textLength="11.6" lengthAdjust="spacingAndGlyphs">200</text><rect x="36.5" y="322.40" width="1.5" height="1.2" fill="#222"/><rect x="36.5" y="314.06" width="1.5" height="1.2" fill="#222"/><rect x="36.5" y="305.71" width="1.5" height="1.2" fill="#222"/><rect x="36.5" y="297.37" width="1.5" height="1.2" fill="#222"/><rect x="36.5" y="289.03" width="1.5" height="1.2" fill="#222"/><rect x="36.5" y="280.69" width="1.5" height="1.2" fill="#222"/><rect x="36.5" y="272.35" width="1.5" height="1.2" fill="#222"/><rect x="36.5" y="264.00" width="1.5" height="1.2" fill="#222"/><rect x="36.5" y="255.66" width="1.5" height="1.2" fill="#222"/><rect x="35" y="247.22" width="3.5" height="1.2" fill="#222"/><text transform="translate(35 247.82) rotate(-90)" text-anchor="middle" font-family="Liberation Sans" font-size="8.6" fill="#222" stroke="#222" stroke-width="0.15" textLength="11.6" lengthAdjust="spacingAndGlyphs">250</text><rect x="36.5" y="238.98" width="1.5" height="1.2" fill="#222"/><rect x="36.5" y="230.64" width="1.5" height="1.2" fill="#222"/><rect x="36.5" y="222.29" width="1.5" height="1.2" fill="#222"/><rect x="36.5" y="213.95" width="1.5" height="1.2" fill="#222"/><rect x="36.5" y="205.61" width="1.5" height="1.2" fill="#222"/><rect x="36.5" y="197.27" width="1.5" height="1.2" fill="#222"/><rect x="36.5" y="188.93" width="1.5" height="1.2" fill="#222"/><rect x="36.5" y="180.58" width="1.5" height="1.2" fill="#222"/><rect x="36.5" y="172.24" width="1.5" height="1.2" fill="#222"/><rect x="35" y="163.80" width="3.5" height="1.2" fill="#222"/><text transform="translate(35 164.40) rotate(-90)" text-anchor="middle" font-family="Liberation Sans" font-size="8.6" fill="#222" stroke="#222" stroke-width="0.15" textLength="11.6" lengthAdjust="spacingAndGlyphs">300</text><rect x="36.5" y="155.56" width="1.5" height="1.2" fill="#222"/><rect x="36.5" y="147.22" width="1.5" height="1.2" fill="#222"/><rect x="36.5" y="138.87" width="1.5" height="1.2" fill="#222"/><rect x="36.5" y="130.53" width="1.5" height="1.2" fill="#222"/><rect x="36.5" y="122.19" width="1.5" height="1.2" fill="#222"/><rect x="36.5" y="113.85" width="1.5" height="1.2" fill="#222"/><rect x="40" y="108" width="943" height="551" fill="#fff"/><rect x="39" y="107" width="1" height="552" fill="#b8b2a0"/><rect x="39" y="107" width="944" height="1" fill="#b8b2a0"/><rect x="330.5" y="169.5" width="349" height="500" fill="#fff" stroke="#a8a8a8" stroke-width="1"/><rect x="680" y="173" width="5" height="490" fill="#acacac"/><path d="M433.3 271.4 L593 271.4 L623.7 402.9 L408.5 402.9 Z" fill="url(#fillg)" stroke="#4a4a40" stroke-width="1"/><rect x="408.5" y="402.9" width="215.2" height="28.5" fill="none" stroke="#6a6a6a" stroke-width="1"/><rect x="430.7" y="268.6" width="4.3" height="4.3" rx="0.8" fill="#fff" stroke="#333" stroke-width="1"/><rect x="622.2" y="401.2" width="2.8" height="2.8" fill="#333"/><path d="M412 400.5 L580 281.5" stroke="#3a3a3a" stroke-width="1.2" stroke-dasharray="3,2.6"/><path d="M579 276.5 L588.5 276 L583.5 283.5 Z" fill="#0a3018"/><rect x="589.6" y="265.7" width="9" height="9.3" fill="#f5c21a" stroke="#222" stroke-width="1.3"/><rect x="402" y="397" width="11.5" height="10.5" fill="#f8f0b0" stroke="#585858" stroke-width="2"/><path d="M497.5 332 L504 343.5" stroke="#333" stroke-width="3.6" stroke-linecap="round"/><path d="M497.5 332 L504 343.5" stroke="#fff" stroke-width="1.6" stroke-linecap="round"/><defs><linearGradient id="trk" x1="0" y1="0" x2="1" y2="0"><stop offset="0" stop-color="#e4e4de"/><stop offset="0.8" stop-color="#fcfcfa"/><stop offset="1" stop-color="#e0e0d8"/></linearGradient></defs><rect x="969.5" y="121" width="15" height="538" fill="url(#trk)"/><rect x="971" y="109" width="11" height="10.5" rx="1.5" fill="#c6d6f7"/><path d="M973.5 116 l3 -3 l3 3" stroke="#4d6185" stroke-width="1.6" fill="none"/><rect x="971" y="253.7" width="11" height="326.6" rx="1" fill="#c2d4f8" stroke="#b0c4ee" stroke-width="0.8"/><rect x="983" y="92" width="17" height="32" fill="#ece9d8"/><rect x="983" y="92" width="1" height="32" fill="#f8f6ee"/><rect x="988" y="94.5" width="1.2" height="1.2" fill="#a8a290"/><rect x="991" y="94.5" width="1.2" height="1.2" fill="#a8a290"/><rect x="994" y="94.5" width="1.2" height="1.2" fill="#a8a290"/><rect x="997" y="94.5" width="1.2" height="1.2" fill="#a8a290"/><circle cx="992" cy="104.5" r="5.5" fill="#fafaf6" stroke="#b8b8b0" stroke-width="1"/><path d="M990.5 101.8 v5.4 l4.2 -2.7 z" fill="#000"/><rect x="986.5" y="112" width="11" height="10.5" rx="1.5" fill="#c6d6f7"/><path d="M989 119 l3 -3 l3 3" stroke="#4d6185" stroke-width="1.6" fill="none"/><rect x="985.5" y="125.30" width="13" height="13.27" fill="#fff" stroke="#333" stroke-width="0.8"/><path d="M985.5 125.30 l13 13.27 M998.5 125.30 l-13 13.27" stroke="#222" stroke-width="0.9"/><rect x="985.5" y="138.57" width="14.5" height="13.6" fill="#4dba6c"/><rect x="985.5" y="138.57" width="14.5" height="1" fill="#000" opacity="0.3"/><rect x="985.5" y="151.84" width="14.5" height="13.6" fill="#4a9462"/><rect x="985.5" y="151.84" width="14.5" height="1" fill="#000" opacity="0.3"/><rect x="985.5" y="165.11" width="14.5" height="13.6" fill="#40a048"/><rect x="985.5" y="165.11" width="14.5" height="1" fill="#000" opacity="0.3"/><rect x="985.5" y="178.38" width="14.5" height="13.6" fill="#84c83a"/><rect x="985.5" y="178.38" width="14.5" height="1" fill="#000" opacity="0.3"/><rect x="985.5" y="191.65" width="14.5" height="13.6" fill="#78c65a"/><rect x="985.5" y="191.65" width="14.5" height="1" fill="#000" opacity="0.3"/><rect x="985.5" y="204.92" width="14.5" height="13.6" fill="#2bb848"/><rect x="985.5" y="204.92" width="14.5" height="1" fill="#000" opacity="0.3"/><rect x="985.5" y="218.19" width="14.5" height="13.6" fill="#96dc40"/><rect x="985.5" y="218.19" width="14.5" height="1" fill="#000" opacity="0.3"/><rect x="985.5" y="231.46" width="14.5" height="13.6" fill="#444232"/><rect x="985.5" y="231.46" width="14.5" height="1" fill="#000" opacity="0.3"/><rect x="985.5" y="244.73" width="14.5" height="13.6" fill="#6e7038"/><rect x="985.5" y="244.73" width="14.5" height="1" fill="#000" opacity="0.3"/><rect x="985.5" y="258.00" width="14.5" height="13.6" fill="#999e68"/><rect x="985.5" y="258.00" width="14.5" height="1" fill="#000" opacity="0.3"/><rect x="985.5" y="271.27" width="14.5" height="13.6" fill="#a3a83a"/><rect x="985.5" y="271.27" width="14.5" height="1" fill="#000" opacity="0.3"/><rect x="985.5" y="284.54" width="14.5" height="13.6" fill="#d2d234"/><rect x="985.5" y="284.54" width="14.5" height="1" fill="#000" opacity="0.3"/><rect x="985.5" y="297.81" width="14.5" height="13.6" fill="#ecec50"/><rect x="985.5" y="297.81" width="14.5" height="1" fill="#000" opacity="0.3"/><rect x="985.5" y="311.08" width="14.5" height="13.6" fill="#f4f08a"/><rect x="985.5" y="311.08" width="14.5" height="1" fill="#000" opacity="0.3"/><rect x="985.5" y="324.35" width="13" height="13.6" fill="#ecebe4"/><rect x="987.2" y="325.15" width="10.5" height="11" fill="#fff8cc" stroke="#333" stroke-width="0.9"/><rect x="985.5" y="337.62" width="14.5" height="13.6" fill="#a86a30"/><rect x="985.5" y="337.62" width="14.5" height="1" fill="#000" opacity="0.3"/><rect x="985.5" y="350.89" width="14.5" height="13.6" fill="#e07a30"/><rect x="985.5" y="350.89" width="14.5" height="1" fill="#000" opacity="0.3"/><rect x="985.5" y="364.16" width="14.5" height="13.6" fill="#dca040"/><rect x="985.5" y="364.16" width="14.5" height="1" fill="#000" opacity="0.3"/><rect x="985.5" y="377.43" width="14.5" height="13.6" fill="#f06a10"/><rect x="985.5" y="377.43" width="14.5" height="1" fill="#000" opacity="0.3"/><rect x="985.5" y="390.70" width="14.5" height="13.6" fill="#f59a30"/><rect x="985.5" y="390.70" width="14.5" height="1" fill="#000" opacity="0.3"/><rect x="985.5" y="403.97" width="14.5" height="13.6" fill="#f8a060"/><rect x="985.5" y="403.97" width="14.5" height="1" fill="#000" opacity="0.3"/><rect x="985.5" y="417.24" width="14.5" height="13.6" fill="#f8c800"/><rect x="985.5" y="417.24" width="14.5" height="1" fill="#000" opacity="0.3"/><rect x="985.5" y="430.51" width="14.5" height="13.6" fill="#f8c890"/><rect x="985.5" y="430.51" width="14.5" height="1" fill="#000" opacity="0.3"/><rect x="985.5" y="443.78" width="14.5" height="13.6" fill="#7a3a28"/><rect x="985.5" y="443.78" width="14.5" height="1" fill="#000" opacity="0.3"/><rect x="985.5" y="457.05" width="14.5" height="13.6" fill="#c03a28"/><rect x="985.5" y="457.05" width="14.5" height="1" fill="#000" opacity="0.3"/><rect x="985.5" y="470.32" width="14.5" height="13.6" fill="#e04a10"/><rect x="985.5" y="470.32" width="14.5" height="1" fill="#000" opacity="0.3"/><rect x="985.5" y="483.59" width="14.5" height="13.6" fill="#f06848"/><rect x="985.5" y="483.59" width="14.5" height="1" fill="#000" opacity="0.3"/><rect x="985.5" y="496.86" width="14.5" height="13.6" fill="#f89888"/><rect x="985.5" y="496.86" width="14.5" height="1" fill="#000" opacity="0.3"/><rect x="985.5" y="510.13" width="14.5" height="13.6" fill="#fcd0d0"/><rect x="985.5" y="510.13" width="14.5" height="1" fill="#000" opacity="0.3"/><rect x="985.5" y="523.40" width="14.5" height="13.6" fill="#a04068"/><rect x="985.5" y="523.40" width="14.5" height="1" fill="#000" opacity="0.3"/><rect x="985.5" y="536.67" width="14.5" height="13.6" fill="#e03850"/><rect x="985.5" y="536.67" width="14.5" height="1" fill="#000" opacity="0.3"/><rect x="985.5" y="549.94" width="14.5" height="13.6" fill="#d84088"/><rect x="985.5" y="549.94" width="14.5" height="1" fill="#000" opacity="0.3"/><rect x="985.5" y="563.21" width="14.5" height="13.6" fill="#e84040"/><rect x="985.5" y="563.21" width="14.5" height="1" fill="#000" opacity="0.3"/><rect x="985.5" y="576.48" width="14.5" height="13.6" fill="#f06080"/><rect x="985.5" y="576.48" width="14.5" height="1" fill="#000" opacity="0.3"/><rect x="985.5" y="589.75" width="14.5" height="13.6" fill="#f05070"/><rect x="985.5" y="589.75" width="14.5" height="1" fill="#000" opacity="0.3"/><rect x="985.5" y="603.02" width="14.5" height="13.6" fill="#e070a0"/><rect x="985.5" y="603.02" width="14.5" height="1" fill="#000" opacity="0.3"/><rect x="985.5" y="616.29" width="14.5" height="13.6" fill="#7a2a88"/><rect x="985.5" y="616.29" width="14.5" height="1" fill="#000" opacity="0.3"/><rect x="985.5" y="629.56" width="14.5" height="13.6" fill="#b02c90"/><rect x="985.5" y="629.56" width="14.5" height="1" fill="#000" opacity="0.3"/><rect x="985.5" y="642.83" width="14.5" height="13.6" fill="#b070b0"/><rect x="985.5" y="642.83" width="14.5" height="1" fill="#000" opacity="0.3"/><rect x="985.5" y="656.10" width="14.5" height="13.6" fill="#c04040"/><rect x="985.5" y="656.10" width="14.5" height="1" fill="#000" opacity="0.3"/><rect x="998.5" y="124" width="1.5" height="535" fill="#000" opacity="0.35"/><rect x="985" y="124" width="0.8" height="535" fill="#000" opacity="0.2"/><rect x="985" y="124.3" width="15" height="1.2" fill="#444"/><rect x="5" y="95" width="1.2" height="1.2" fill="#a8a290"/><rect x="8" y="95" width="1.2" height="1.2" fill="#a8a290"/><rect x="11" y="95" width="1.2" height="1.2" fill="#a8a290"/><rect x="14" y="95" width="1.2" height="1.2" fill="#a8a290"/><rect x="17" y="95" width="1.2" height="1.2" fill="#a8a290"/><path d="M8.5 103.5 L8.5 113.5 L10.8 111.2 L12.6 114.8 L14.2 114 L12.4 110.5 L15.3 110.2 Z" fill="#fbfbff" stroke="#6e6e8e" stroke-width="1"/><circle cx="8.7" cy="127" r="1.6" fill="#fff" stroke="#333" stroke-width="0.9"/><path d="M8.7 128.8 q0 4 3.5 6.5" stroke="#555" stroke-width="0.9" fill="none"/><path d="M10.8 129.5 L16.2 132 L12.8 135.5 Z" fill="#111"/><path d="M16 138 h4 v-4 z" fill="#111"/><path d="M9.5 144 v10.5 h7 M6.5 147.5 h10 v9.5" stroke="#2a2a4a" stroke-width="1.4" fill="none"/><path d="M7 156.5 L17 145" stroke="#5a5a7a" stroke-width="0.9"/><path d="M16 158 h4 v-4 z" fill="#111"/><path d="M8.2 174.5 q-2.6 -3.2 -1.8 -5 q0.8 -0.8 1.8 0.2 v-3 q0 -1.2 1.1 -1.2 q1.1 0 1.1 1.2 v-0.6 q0 -1.2 1.1 -1.2 q1.1 0 1.1 1.2 v0.4 q0 -1.1 1.1 -1.1 q1.1 0 1.1 1.1 v1 q0 -0.9 1 -0.9 q1 0 1 1 v3.5 q0 3 -2.6 4.4 h-4 z" fill="#fff" stroke="#6a6a6a" stroke-width="0.9"/><path d="M16 178 h4 v-4 z" fill="#111"/><path d="M7 186 L16.5 195.5" stroke="#333" stroke-width="0.9" stroke-dasharray="1.2,1.3"/><rect x="10" y="189.6" width="2.8" height="2.8" fill="#fff" stroke="#333" stroke-width="0.8"/><path d="M16 198.5 h4 v-4 z" fill="#111"/><path d="M6.5 208 l3.5 -3.5 l4 4 l-3.5 3.5 z" fill="#d88a3a" stroke="#6a4a3a" stroke-width="0.8"/><rect x="10.5" y="210.5" width="7.5" height="6.5" fill="#c8cce0" stroke="#445" stroke-width="0.9"/><rect x="12" y="212" width="3.5" height="3" fill="#c07a40"/><path d="M16 219 h4 v-4 z" fill="#111"/><rect x="7.5" y="227.5" width="8.5" height="8.5" fill="#f0f0f6" stroke="#666" stroke-width="1"/><path d="M16 240 h4 v-4 z" fill="#111"/><ellipse cx="11.5" cy="252" rx="4.5" ry="4.5" fill="#f0f0f6" stroke="#666" stroke-width="1"/><path d="M16 260 h4 v-4 z" fill="#111"/><path d="M9 268 h5.5 l2.5 4.3 l-2.5 4.4 h-5.5 l-2.5 -4.4 z" fill="#f0f0f6" stroke="#666" stroke-width="1"/><path d="M16 280 h4 v-4 z" fill="#111"/><circle cx="11.5" cy="289.5" r="3.2" fill="#f0f0f6" stroke="#555" stroke-width="0.9"/><path d="M6.5 291 h5 v5 h-5 z" fill="#dde" stroke="#444" stroke-width="0.9"/><path d="M11.5 297.5 l5 -5.5 v5.5 z" fill="#eef" stroke="#444" stroke-width="0.9"/><path d="M16 301 h4 v-4 z" fill="#111"/><text x="11.5" y="317" text-anchor="middle" font-family="Liberation Sans" font-size="11.5" fill="#444" stroke="#444" stroke-width="0.4">字</text><rect x="6.5" y="328.5" width="10" height="10" fill="#ececf4" stroke="#777" stroke-width="1"/><path d="M6.5 331 h10 M6.5 334.2 h10 M9.8 331 v7.5 M13.2 331 v7.5" stroke="#888" stroke-width="0.7"/><path d="M7.5 350 q0.5 -2.5 2.5 -1.5 q1 -1.5 2.5 -0.5 q1.5 -1.5 3 0 q1.5 1 0.8 3 q1.5 1.5 0 3 q-0.5 2.5 -2.8 1.8 q-1.5 1.5 -3 0 q-2 1 -2.8 -1 q-1.5 -1.5 -0.2 -2.5 z" fill="#f6f6fa" stroke="#444" stroke-width="1"/><path d="M9.5 352 l2 1.5 l1.5 -2 l1.5 1.5" stroke="#555" stroke-width="0.8" fill="none"/><path d="M16 361 h4 v-4 z" fill="#111"/><path d="M6.5 378.5 L12.5 372.5" stroke="#5a6a6a" stroke-width="2"/><path d="M11 371 l3.5 3.5 l-1.5 1 l-3 -3 z" fill="#222"/><circle cx="15" cy="369.5" r="2" fill="#2a2a3a"/><path d="M16 381 h4 v-4 z" fill="#111"/><path d="M12 388 l3.2 6.2 l-3.2 4 l-3.2 -4 z" fill="#fff" stroke="#333" stroke-width="1"/><path d="M12 392 v4" stroke="#333" stroke-width="0.7"/><rect x="8" y="398.5" width="8" height="2" fill="#222"/><path d="M16.5 402 h4 v-4 z" fill="#111"/><path d="M6.5 414 l5 -5 l5 5 l-5 5 z" fill="#fff" stroke="#333" stroke-width="1"/><path d="M7.5 415 l4 4 l4 -4 z" fill="#e07a18"/><path d="M11.5 409 l-1 -1.8" stroke="#333" stroke-width="0.8"/><path d="M16.5 422 h4 v-4 z" fill="#111"/><rect x="2.6" y="425.6" width="17.6" height="17.6" rx="2" fill="#f4f2ea" stroke="#6a7888" stroke-width="1.3"/><path d="M8 432 l2.8 -3 l2.8 3 l-2.8 3 z" fill="#fff" stroke="#6a4a3a" stroke-width="0.9"/><path d="M9 432.5 l1.8 2 l1.8 -2 z" fill="#8a6a5a"/><path d="M10.5 440 q2 -4.5 4.5 0 z" fill="#f0a830"/><path d="M16 442 h4 v-4 z" fill="#111"/><rect x="22.5" y="426.5" width="108" height="45.5" fill="#fcfcfa" stroke="#a8a8a0" stroke-width="1"/><rect x="23" y="427" width="17" height="45" fill="#f4f3ee"/><rect x="28" y="429.5" width="1.5" height="1.2" fill="#b0aca0"/><rect x="32" y="429.5" width="1.5" height="1.2" fill="#b0aca0"/><rect x="36" y="429.5" width="1.5" height="1.2" fill="#b0aca0"/><rect x="40" y="429.5" width="1.5" height="1.2" fill="#b0aca0"/><rect x="44" y="429.5" width="1.5" height="1.2" fill="#b0aca0"/><rect x="48" y="429.5" width="1.5" height="1.2" fill="#b0aca0"/><rect x="52" y="429.5" width="1.5" height="1.2" fill="#b0aca0"/><rect x="56" y="429.5" width="1.5" height="1.2" fill="#b0aca0"/><rect x="60" y="429.5" width="1.5" height="1.2" fill="#b0aca0"/><rect x="64" y="429.5" width="1.5" height="1.2" fill="#b0aca0"/><rect x="68" y="429.5" width="1.5" height="1.2" fill="#b0aca0"/><rect x="72" y="429.5" width="1.5" height="1.2" fill="#b0aca0"/><rect x="76" y="429.5" width="1.5" height="1.2" fill="#b0aca0"/><rect x="80" y="429.5" width="1.5" height="1.2" fill="#b0aca0"/><rect x="84" y="429.5" width="1.5" height="1.2" fill="#b0aca0"/><rect x="88" y="429.5" width="1.5" height="1.2" fill="#b0aca0"/><rect x="92" y="429.5" width="1.5" height="1.2" fill="#b0aca0"/><rect x="96" y="429.5" width="1.5" height="1.2" fill="#b0aca0"/><rect x="100" y="429.5" width="1.5" height="1.2" fill="#b0aca0"/><rect x="104" y="429.5" width="1.5" height="1.2" fill="#b0aca0"/><rect x="108" y="429.5" width="1.5" height="1.2" fill="#b0aca0"/><rect x="112" y="429.5" width="1.5" height="1.2" fill="#b0aca0"/><rect x="116" y="429.5" width="1.5" height="1.2" fill="#b0aca0"/><rect x="120" y="429.5" width="1.5" height="1.2" fill="#b0aca0"/><rect x="124" y="429.5" width="1.5" height="1.2" fill="#b0aca0"/><rect x="23.5" y="435.5" width="106" height="14" fill="#c9d8f2" stroke="#7896c8" stroke-width="1"/><path d="M27 440 l3 -3 l3 3 l-3 3 z" fill="#fff" stroke="#634" stroke-width="0.8"/><path d="M31 447 q2 -4 4 0 z" fill="#f0a830"/><text x="49.7" y="447" font-family="Liberation Sans" font-size="10" fill="#111" textLength="46.9" lengthAdjust="spacingAndGlyphs" stroke="#111" stroke-width="0.2">交互式填充</text><text x="108.8" y="446.8" font-family="Liberation Sans" font-size="9.2" fill="#111" textLength="5.6" lengthAdjust="spacingAndGlyphs" stroke="#111" stroke-width="0.2">G</text><rect x="27" y="454" width="10" height="11" fill="#e8e8ee"/><path d="M26 457 h12 M26 462 h12 M29.5 453.5 v12 M33.5 453.5 v12" stroke="#666" stroke-width="0.8"/><path d="M26 459.5 h12" stroke="#333" stroke-width="1.4"/><circle cx="29.5" cy="459.5" r="1" fill="#333"/><text x="49.7" y="464" font-family="Liberation Sans" font-size="10" fill="#111" textLength="37.1" lengthAdjust="spacingAndGlyphs" stroke="#111" stroke-width="0.2">网状填充</text><text x="109" y="463.5" font-family="Liberation Sans" font-size="7.5" fill="#111" font-weight="bold" textLength="5" lengthAdjust="spacingAndGlyphs" >M</text><rect x="132.5" y="435.5" width="86" height="11.5" fill="#ffffe1" stroke="#222" stroke-width="1"/><text x="134" y="444.8" font-family="Liberation Sans" font-size="9.3" fill="#111" textLength="81" lengthAdjust="spacingAndGlyphs" stroke="#111" stroke-width="0.15">交互式填充工具 (G)</text><path d="M133.73 429.38 L388.42 342.80 L389.36 345.49 L400.20 335.60 L385.56 334.64 L386.50 337.33 L133.47 428.62 Z" fill="#ea3636"/><path d="M979.09 426.17 L604.56 275.56 L605.57 273.00 L590.90 273.40 L601.35 283.70 L602.36 281.14 L978.91 426.63 Z" fill="#ea3636"/><path d="M969.58 335.00 L417.93 400.23 L417.60 397.50 L405.40 404.80 L419.01 408.92 L418.67 406.19 L969.62 335.40 Z" fill="#ea3636"/><rect x="1" y="425.5" width="131.5" height="25" fill="none" stroke="#ea3636" stroke-width="2.8"/><rect x="979.7" y="323" width="22" height="13" fill="none" stroke="#ea3636" stroke-width="2.8"/><rect x="980" y="413.3" width="22" height="13.8" fill="none" stroke="#ea3636" stroke-width="2.6"/>
</svg></body></html>
